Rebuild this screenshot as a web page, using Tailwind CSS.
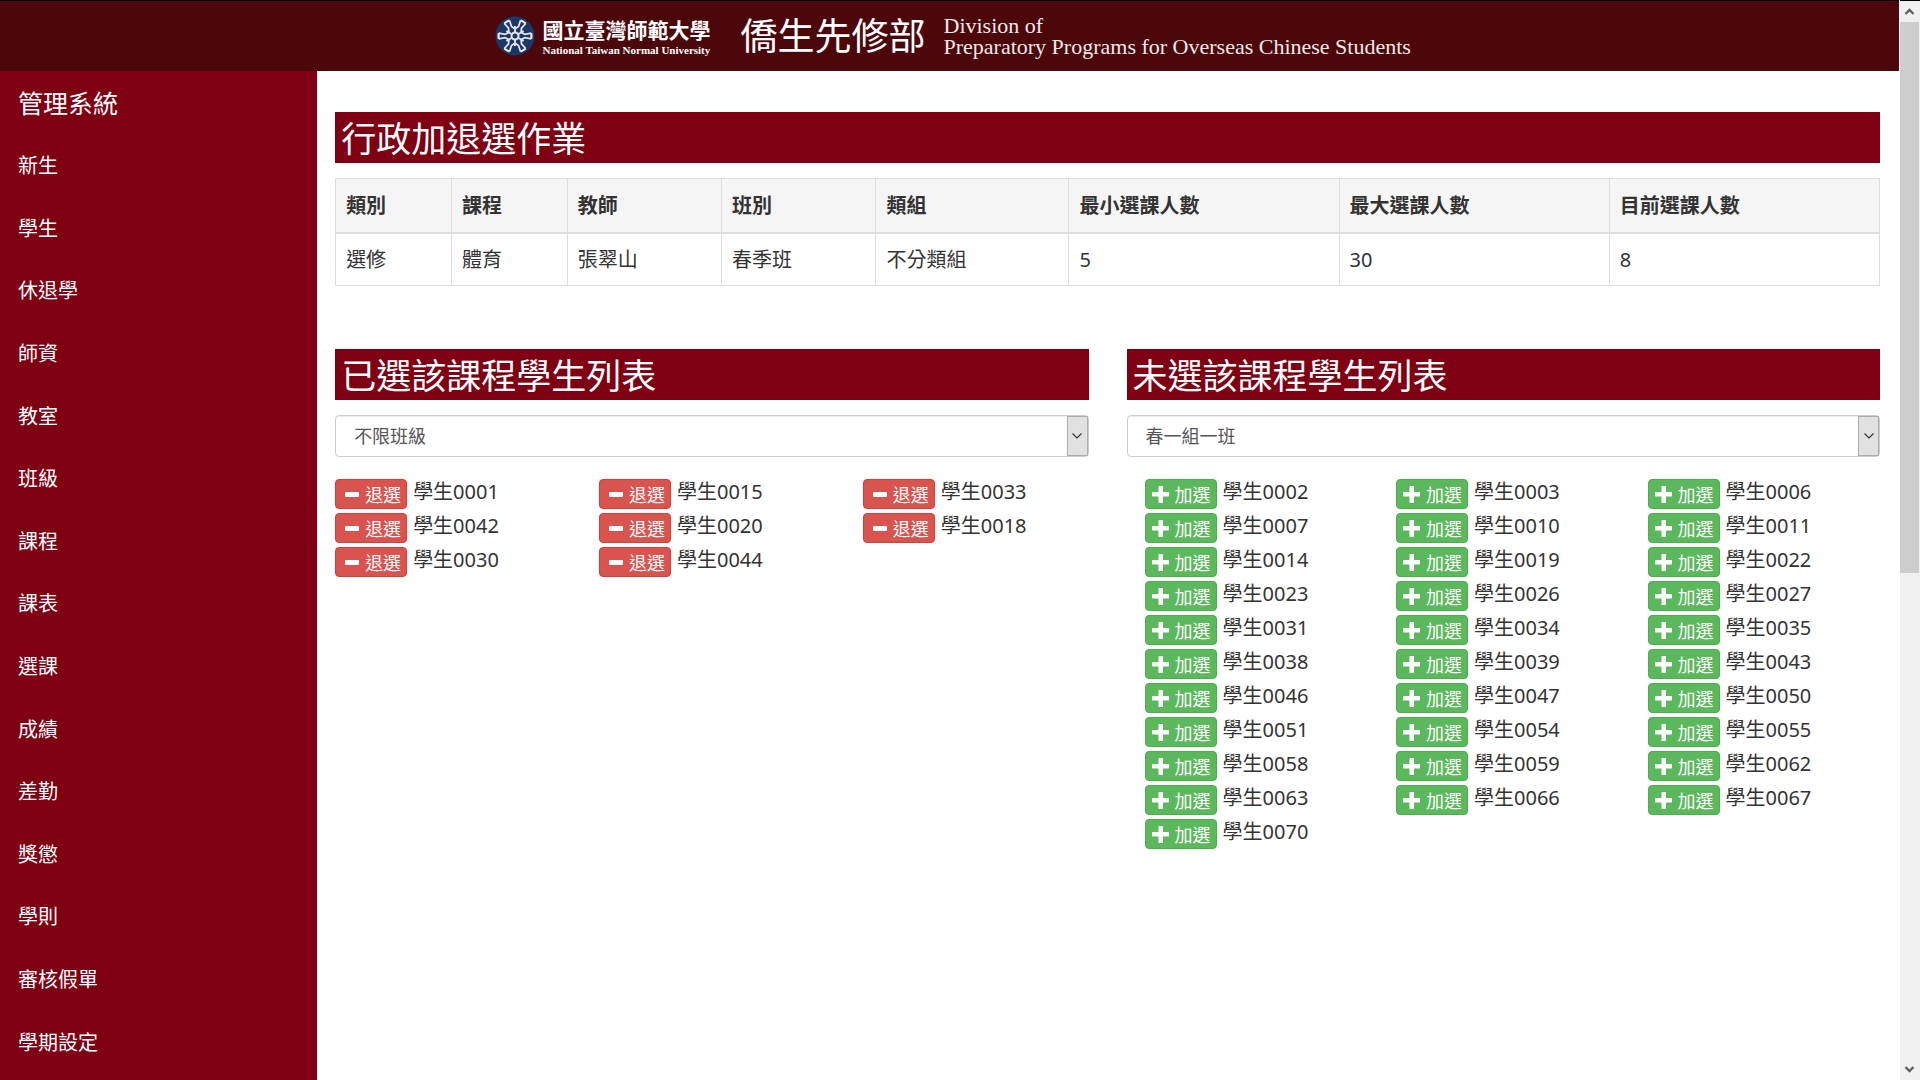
<!DOCTYPE html>
<html lang="zh-Hant">
<head>
<meta charset="utf-8">
<meta name="viewport" content="width=device-width, initial-scale=1">
<title>行政加退選作業</title>
<script src="https://cdn.jsdelivr.net/npm/@tailwindcss/browser@4"></script>
</head>
<body class="flex min-h-screen bg-white font-['Noto_Sans','Noto_Sans_CJK_TC',sans-serif] text-xl text-[#333]">
<svg class="hidden" aria-hidden="true">
  <symbol id="plus" viewBox="0 0 17 17"><path d="M7 0h3.500l.5.500V6h5.500l.5.500V10l-.5.500H11V16.500l-.5.500H7l-.5-.5V10.500H.5L0 10V6.500L.5 6h6V.5z" fill="currentColor"/></symbol>
  <symbol id="minus" viewBox="0 0 17 17"><rect x="3" y="6" width="14" height="5" rx="1" fill="currentColor"/></symbol>
  <symbol id="down" viewBox="0 0 12 12"><path d="M1.500 3.500 6 8l4.500-4.500" fill="none" stroke="currentColor" stroke-width="1.200"/></symbol>
  <symbol id="petal" viewBox="-20 -20 40 40" overflow="visible"><path d="M0-4v-6M-5.500-15.500-3.500-9.500 0-7 3.500-9.500 5.500-15.500" fill="none" stroke="currentColor" stroke-width="1.800"/><path d="M-5.500-15.500A16.500 16.500 0 0 0-10.700-12.600M5.500-15.500A16.500 16.500 0 0 1 10.700-12.600" fill="none" stroke="currentColor" stroke-width="1.800"/></symbol>
</svg>

<div class="flex min-w-0 flex-1 flex-col">
  <header class="flex h-[71px] items-center justify-center border-t border-black bg-[#4c070b] text-white">
    <div class="flex w-[910px] items-center">
      <svg class="h-10 w-10 shrink-0 text-[#e8e4ec]" viewBox="-20 -20 40 40" role="img" aria-label="校徽">
        <circle r="19.500" fill="#1b3766"/>
        <g><use href="#petal" x="-20" y="-20" width="40" height="40"/></g>
        <g transform="rotate(60)"><use href="#petal" x="-20" y="-20" width="40" height="40"/></g>
        <g transform="rotate(120)"><use href="#petal" x="-20" y="-20" width="40" height="40"/></g>
        <g transform="rotate(180)"><use href="#petal" x="-20" y="-20" width="40" height="40"/></g>
        <g transform="rotate(240)"><use href="#petal" x="-20" y="-20" width="40" height="40"/></g>
        <g transform="rotate(300)"><use href="#petal" x="-20" y="-20" width="40" height="40"/></g>
        <circle r="3.500" fill="none" stroke="currentColor" stroke-width="2"/>
      </svg>
      <div class="ml-2 w-[198px] shrink-0 whitespace-nowrap">
        <div class="text-[21px] leading-7 font-bold">國立臺灣師範大學</div>
        <div class="font-['Liberation_Serif',serif] text-[11px] leading-3 font-bold">National Taiwan Normal University</div>
      </div>
      <div class="w-[203px] shrink-0 text-[37px] leading-[48px] whitespace-nowrap">僑生先修部</div>
      <div class="font-['Liberation_Serif',serif] text-[22px] leading-[21px] whitespace-nowrap text-[#f3e9ea]">Division of<br>Preparatory Programs for Overseas Chinese Students</div>
    </div>
  </header>

  <div class="flex flex-1">
    <nav class="flex w-[16.7%] shrink-0 flex-col bg-[#7f0013] px-[18px] pb-1.5 text-white">
      <h1 class="flex h-16 items-center text-[25px]">管理系統</h1>
      <ul class="grid flex-1 auto-rows-fr items-center">
        <li><a href="#">新生</a></li>
        <li><a href="#">學生</a></li>
        <li><a href="#">休退學</a></li>
        <li><a href="#">師資</a></li>
        <li><a href="#">教室</a></li>
        <li><a href="#">班級</a></li>
        <li><a href="#">課程</a></li>
        <li><a href="#">課表</a></li>
        <li><a href="#">選課</a></li>
        <li><a href="#">成績</a></li>
        <li><a href="#">差勤</a></li>
        <li><a href="#">獎懲</a></li>
        <li><a href="#">學則</a></li>
        <li><a href="#">審核假單</a></li>
        <li><a href="#">學期設定</a></li>
      </ul>
    </nav>

    <main class="min-w-0 flex-1 pt-[41px] pr-[19px] pl-[18px]">
      <h2 class="mb-[15px] bg-[#7f0013] px-1.5 pt-0.5 text-[35px] leading-[49px] text-white">行政加退選作業</h2>
      <table class="w-full table-fixed border-collapse text-left">
        <colgroup>
          <col class="w-[7.5%]"><col class="w-[7.5%]"><col class="w-[10%]"><col class="w-[10%]"><col class="w-[12.5%]"><col class="w-[17.5%]"><col class="w-[17.5%]"><col class="w-[17.5%]">
        </colgroup>
        <thead class="bg-[#f5f5f5]">
          <tr class="h-[54px] border-b-2 border-[#ddd] *:border-x *:border-t *:border-[#ddd] *:px-2.5 *:pt-0.5">
            <th>類別</th><th>課程</th><th>教師</th><th>班別</th><th>類組</th><th>最小選課人數</th><th>最大選課人數</th><th>目前選課人數</th>
          </tr>
        </thead>
        <tbody>
          <tr class="h-[53px] *:border-x *:border-b *:border-[#ddd] *:px-2.5 *:pt-0.5">
            <td>選修</td><td>體育</td><td>張翠山</td><td>春季班</td><td>不分類組</td><td>5</td><td>30</td><td>8</td>
          </tr>
        </tbody>
      </table>

      <div class="mt-[63px] grid grid-cols-2 gap-[38px]">
        <section>
          <h2 class="mb-[15px] bg-[#7f0013] px-1.5 pt-0.5 text-[35px] leading-[49px] text-white">已選該課程學生列表</h2>
          <div class="relative h-[42px]">
            <select aria-label="已選班級" class="block h-full w-full appearance-none rounded border border-[#ccc] bg-white px-[18px] text-lg text-[#555] shadow-[inset_0_1px_1px_rgba(0,0,0,0.075)]"><option>不限班級</option></select>
            <span class="pointer-events-none absolute inset-y-px right-px flex w-[21px] items-center justify-center border border-[#adadad] bg-[#e1e1e1]"><svg class="h-3 w-3"><use href="#down"/></svg></span>
          </div>
          <ul id="enrolled" class="mt-[22px] -mr-[38px] grid grid-cols-3"></ul>
        </section>
        <section>
          <h2 class="mb-[15px] bg-[#7f0013] px-1.5 pt-0.5 text-[35px] leading-[49px] text-white">未選該課程學生列表</h2>
          <div class="relative h-[42px]">
            <select aria-label="未選班級" class="block h-full w-full appearance-none rounded border border-[#ccc] bg-white px-[18px] text-lg text-[#555] shadow-[inset_0_1px_1px_rgba(0,0,0,0.075)]"><option>春一組一班</option></select>
            <span class="pointer-events-none absolute inset-y-px right-px flex w-[21px] items-center justify-center border border-[#adadad] bg-[#e1e1e1]"><svg class="h-3 w-3"><use href="#down"/></svg></span>
          </div>
          <ul id="available" class="mt-[22px] -mr-[19px] ml-[18px] grid grid-cols-3"></ul>
        </section>
      </div>
    </main>
  </div>
</div>

<div class="sticky top-0 ml-px flex h-screen w-5 shrink-0 flex-col items-center bg-[#f0f0f0] text-[#606060]" aria-hidden="true">
  <div class="h-px w-full bg-black"></div>
  <svg class="h-[21px] w-5 shrink-0" viewBox="0 0 20 21"><path d="M5.500 13 9.500 9l4 4" fill="none" stroke="currentColor" stroke-width="2.400"/></svg>
  <div class="h-[551px] w-full border-r border-[#f0f0f0] bg-[#cdcdcd]"></div>
  <svg class="mt-auto h-[21px] w-5 shrink-0" viewBox="0 0 20 21"><path d="M5.500 8l4 4 4-4" fill="none" stroke="currentColor" stroke-width="2.400"/></svg>
</div>

<script>
const row = (id, label, icon, color) => `<li class="flex h-[34px] items-start gap-1.5"><button type="button" class="flex h-[30px] w-[72px] shrink-0 items-center gap-1.5 rounded border pl-1.5 ${color} text-lg leading-7 text-white"><svg class="h-[17px] w-[17px] shrink-0"><use href="#${icon}"/></svg><span class="w-9 pt-px">${label}</span></button><span class="leading-[26px]">學生${id}</span></li>`;
const fill = (list, ids, ...rest) => { document.getElementById(list).innerHTML = ids.split(' ').map(id => row(id, ...rest)).join(''); };
fill('enrolled', '0001 0015 0033 0042 0020 0018 0030 0044', '退選', 'minus', 'bg-[#d9534f] border-[#d43f3a]');
fill('available', '0002 0003 0006 0007 0010 0011 0014 0019 0022 0023 0026 0027 0031 0034 0035 0038 0039 0043 0046 0047 0050 0051 0054 0055 0058 0059 0062 0063 0066 0067 0070', '加選', 'plus', 'bg-[#5cb85c] border-[#4cae4c]');
</script>
</body>
</html>
